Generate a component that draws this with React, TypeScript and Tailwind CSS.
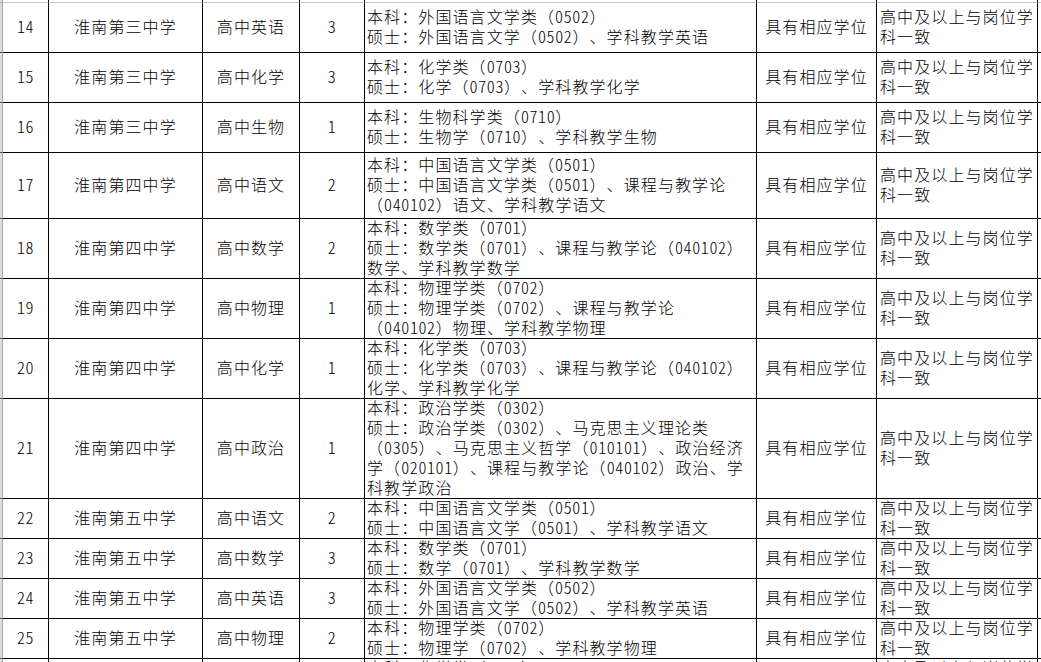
import React from "react";

type Row = {
  no: string;
  school: string;
  subject: string;
  count: string;
  major: string[];
};

const rows: Row[] = [
  { no: "14", school: "淮南第三中学", subject: "高中英语", count: "3", major: ["本科：外国语言文学类（0502）", "硕士：外国语言文学（0502）、学科教学英语"] },
  { no: "15", school: "淮南第三中学", subject: "高中化学", count: "3", major: ["本科：化学类（0703）", "硕士：化学（0703）、学科教学化学"] },
  { no: "16", school: "淮南第三中学", subject: "高中生物", count: "1", major: ["本科：生物科学类（0710）", "硕士：生物学（0710）、学科教学生物"] },
  { no: "17", school: "淮南第四中学", subject: "高中语文", count: "2", major: ["本科：中国语言文学类（0501）", "硕士：中国语言文学类（0501）、课程与教学论", "（040102）语文、学科教学语文"] },
  { no: "18", school: "淮南第四中学", subject: "高中数学", count: "2", major: ["本科：数学类（0701）", "硕士：数学类（0701）、课程与教学论（040102）", "数学、学科教学数学"] },
  { no: "19", school: "淮南第四中学", subject: "高中物理", count: "1", major: ["本科：物理学类（0702）", "硕士：物理学类（0702）、课程与教学论", "（040102）物理、学科教学物理"] },
  { no: "20", school: "淮南第四中学", subject: "高中化学", count: "1", major: ["本科：化学类（0703）", "硕士：化学类（0703）、课程与教学论（040102）", "化学、学科教学化学"] },
  { no: "21", school: "淮南第四中学", subject: "高中政治", count: "1", major: ["本科：政治学类（0302）", "硕士：政治学类（0302）、马克思主义理论类", "（0305）、马克思主义哲学（010101）、政治经济", "学（020101）、课程与教学论（040102）政治、学", "科教学政治"] },
  { no: "22", school: "淮南第五中学", subject: "高中语文", count: "2", major: ["本科：中国语言文学类（0501）", "硕士：中国语言文学（0501）、学科教学语文"] },
  { no: "23", school: "淮南第五中学", subject: "高中数学", count: "3", major: ["本科：数学类（0701）", "硕士：数学（0701）、学科教学数学"] },
  { no: "24", school: "淮南第五中学", subject: "高中英语", count: "3", major: ["本科：外国语言文学类（0502）", "硕士：外国语言文学（0502）、学科教学英语"] },
  { no: "25", school: "淮南第五中学", subject: "高中物理", count: "2", major: ["本科：物理学类（0702）", "硕士：物理学（0702）、学科教学物理"] },
  { no: "26", school: "淮南第五中学", subject: "高中化学", count: "2", major: ["本科：化学类（0703）", "硕士：化学（0703）、学科教学化学"] },
];

function T({ s }: { s: string }) {
  const parts = s.split(/(\d+)/);
  return (
    <>
      {parts.map((p, i) =>
        /^\d+$/.test(p) ? (
          <span key={i} className="[font-feature-settings:'hwid'] tracking-[0.6px]">
            {p}
          </span>
        ) : (
          <React.Fragment key={i}>{p}</React.Fragment>
        )
      )}
    </>
  );
}

const cell = "border-r border-b border-black overflow-hidden pb-[3px]";
const center = "flex items-center justify-center whitespace-nowrap";

export default function App() {
  return (
    <div
      className="w-[1041px] h-[662px] overflow-hidden bg-white text-black text-[16px] leading-[20px] tracking-[1.1px] font-light [text-spacing-trim:space-all]"
      style={{ fontFamily: '"Noto Sans CJK SC", "Noto Sans CJK JP", sans-serif' }}
    >
      <div className="grid grid-cols-[3px_46px_154px_97px_65px_392px_120px_161px_1fr] grid-rows-[3px_50px_50px_50px_66px_60px_60px_60px_100px_40px_40px_40px_40px_40px]">
        {/* top grid strip */}
        <div className="bg-[#dcdcdc] border-r border-b border-[#a8a8a8]" />
        {[0, 1, 2, 3, 4, 5, 6].map((i) => (
          <div key={i} className="border-r border-black border-b border-b-[#c6c6c6]" />
        ))}
        <div className="border-b border-[#c6c6c6]" />

        {rows.map((r) => (
          <React.Fragment key={r.no}>
            <div className="bg-[#dcdcdc] border-r border-b border-r-[#a8a8a8] border-b-[#555]" />
            <div className={`${cell} ${center}`}>
              <T s={r.no} />
            </div>
            <div className={`${cell} ${center}`}>{r.school}</div>
            <div className={`${cell} ${center}`}>{r.subject}</div>
            <div className={`${cell} ${center}`}>
              <T s={r.count} />
            </div>
            <div className={`${cell} flex flex-col justify-center pl-[2px] whitespace-nowrap`}>
              {r.major.map((m, i) => (
                <div key={i} className="shrink-0">
                  <T s={m} />
                </div>
              ))}
            </div>
            <div className={`${cell} ${center}`}>具有相应学位</div>
            <div className={`${cell} flex flex-col justify-center pl-[3px] whitespace-nowrap`}>
              <div>高中及以上与岗位学</div>
              <div>科一致</div>
            </div>
            <div className="border-b border-black" />
          </React.Fragment>
        ))}
      </div>
    </div>
  );
}
